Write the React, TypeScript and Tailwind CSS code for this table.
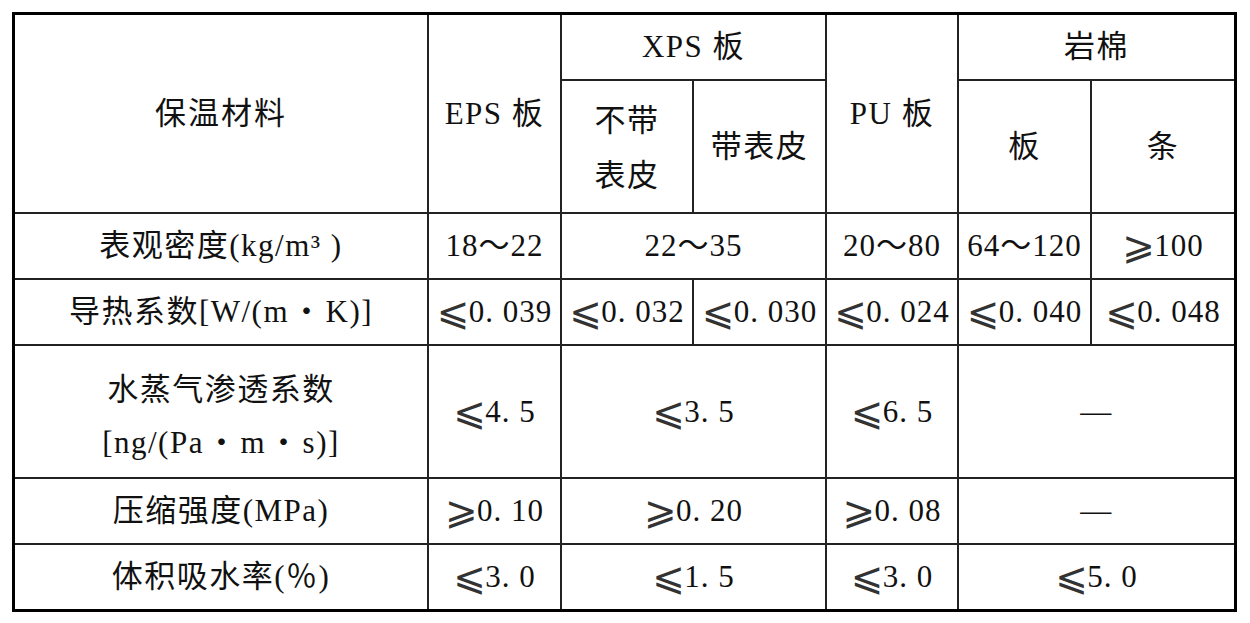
import React from "react";

const F = {
  fontFamily:
    '"Liberation Serif", "Noto Sans CJK SC", "DejaVu Sans", serif',
};

function C({
  children,
  className = "",
}: {
  children: React.ReactNode;
  className?: string;
}) {
  return (
    <div
      className={
        "bg-white flex items-center justify-center text-center text-[31px] leading-[36px] tracking-[1.5px] text-[#111] whitespace-nowrap overflow-hidden " +
        className
      }
    >
      {children}
    </div>
  );
}

const SYM =
  "inline-block w-[32px] text-[39px] leading-[30px] align-[-1px] text-left tracking-normal text-[#333] [font-family:'DejaVu_Sans_ExtraLight','DejaVu_Sans',sans-serif]";

function Le() {
  return <span className={SYM}>⩽</span>;
}
function Ge() {
  return <span className={SYM}>⩾</span>;
}

const N = "tracking-[1px]";

export default function App() {
  return (
    <div className="w-[1250px] h-[623px] bg-white pt-[12px] pl-[12px]" style={F}>
      <div className="grid w-max border-[3px] border-black bg-[#222] gap-[2px] grid-cols-[412px_131px_130px_131px_130px_131px_142px] grid-rows-[64px_131px_64px_64px_131px_64px_64px]">
        {/* header */}
        <C className="row-span-2 tracking-[2px]">保温材料</C>
        <C className="row-span-2">EPS 板</C>
        <C className="col-span-2">XPS 板</C>
        <C className="row-span-2">PU 板</C>
        <C className="col-span-2">岩棉</C>
        <C className="leading-[55px] pt-[2px]">
          <span>
            不带
            <br />
            表皮
          </span>
        </C>
        <C>带表皮</C>
        <C>板</C>
        <C>条</C>

        {/* 表观密度 */}
        <C>表观密度(kg/m³ )</C>
        <C className={N}>18～22</C>
        <C className={"col-span-2 " + N}>22～35</C>
        <C className={N}>20～80</C>
        <C className={N}>64～120</C>
        <C className={N}>
          <Ge />
          100
        </C>

        {/* 导热系数 */}
        <C>
          导热系数[W/(m<span className="mx-[2px]">・</span>K)]
        </C>
        <C className={N}>
          <Le />0. 039
        </C>
        <C className={N}>
          <Le />0. 032
        </C>
        <C className={N}>
          <Le />0. 030
        </C>
        <C className={N}>
          <Le />0. 024
        </C>
        <C className={N}>
          <Le />0. 040
        </C>
        <C className={N}>
          <Le />0. 048
        </C>

        {/* 水蒸气渗透系数 */}
        <C className="leading-[53px] pt-[8px]">
          <span>
            水蒸气渗透系数
            <br />
            [ng/(Pa<span className="mx-[2px]">・</span>m
            <span className="mx-[2px]">・</span>s)]
          </span>
        </C>
        <C className={N}>
          <Le />4. 5
        </C>
        <C className={"col-span-2 " + N}>
          <Le />3. 5
        </C>
        <C className={N}>
          <Le />6. 5
        </C>
        <C className="col-span-2">—</C>

        {/* 压缩强度 */}
        <C>压缩强度(MPa)</C>
        <C className={N}>
          <Ge />0. 10
        </C>
        <C className={"col-span-2 " + N}>
          <Ge />0. 20
        </C>
        <C className={N}>
          <Ge />0. 08
        </C>
        <C className="col-span-2">—</C>

        {/* 体积吸水率 */}
        <C>体积吸水率(％)</C>
        <C className={N}>
          <Le />3. 0
        </C>
        <C className={"col-span-2 " + N}>
          <Le />1. 5
        </C>
        <C className={N}>
          <Le />3. 0
        </C>
        <C className={"col-span-2 " + N}>
          <Le />5. 0
        </C>
      </div>
    </div>
  );
}
